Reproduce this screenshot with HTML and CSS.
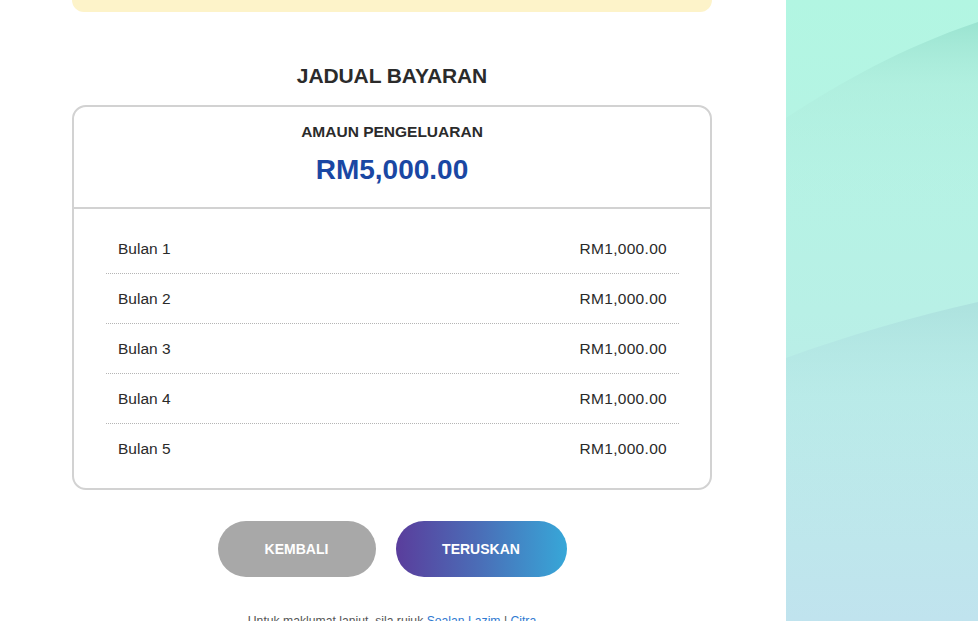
FILE: index.html
```html
<!DOCTYPE html>
<html lang="ms">
<head>
<meta charset="utf-8">
<title>Jadual Bayaran</title>
<link rel="stylesheet" href="styles.css">
</head>
<body>
<div class="page">
  <main class="main">
    <div class="notice"></div>
    <h1 class="title">JADUAL BAYARAN</h1>
    <section class="card">
      <div class="card-head">
        <div class="label">AMAUN PENGELUARAN</div>
        <div class="amount">RM5,000.00</div>
      </div>
      <div class="rows">
        <div class="row"><span>Bulan 1</span><span class="val">RM1,000.00</span></div>
        <div class="row"><span>Bulan 2</span><span class="val">RM1,000.00</span></div>
        <div class="row"><span>Bulan 3</span><span class="val">RM1,000.00</span></div>
        <div class="row"><span>Bulan 4</span><span class="val">RM1,000.00</span></div>
        <div class="row"><span>Bulan 5</span><span class="val">RM1,000.00</span></div>
      </div>
    </section>
    <div class="actions">
      <button class="btn btn-back">KEMBALI</button>
      <button class="btn btn-next">TERUSKAN</button>
    </div>
    <p class="foot">Untuk maklumat lanjut, sila rujuk <a href="#">Soalan Lazim</a> | <a href="#">Citra</a></p>
  </main>
  <aside class="side">
    <svg class="waves" viewBox="0 0 192 621" preserveAspectRatio="none" width="192" height="621">
      <defs>
        <linearGradient id="bg" x1="0" y1="0" x2="0" y2="1">
          <stop offset="0" stop-color="#b2f6e2"/>
          <stop offset="0.5" stop-color="#b8f0e6"/>
          <stop offset="1" stop-color="#c0e3ee"/>
        </linearGradient>
        <linearGradient id="sh1" x1="0" y1="0" x2="0" y2="1">
          <stop offset="0" stop-color="#98e2cf" stop-opacity="0.9"/>
          <stop offset="0.3" stop-color="#ace9da" stop-opacity="0.45"/>
          <stop offset="1" stop-color="#b8f0e6" stop-opacity="0"/>
        </linearGradient>
        <linearGradient id="sh2" x1="0" y1="0" x2="0" y2="1">
          <stop offset="0" stop-color="#a8dcdb" stop-opacity="0.7"/>
          <stop offset="0.4" stop-color="#b6e4e8" stop-opacity="0.25"/>
          <stop offset="1" stop-color="#c0e3ee" stop-opacity="0"/>
        </linearGradient>
      </defs>
      <rect x="0" y="0" width="192" height="621" fill="url(#bg)"/>
      <path d="M0 118 C55 82 115 48 192 22 L192 230 L0 230 Z" fill="url(#sh1)"/>
      <path d="M0 358 C60 336 130 316 192 302 L192 540 L0 540 Z" fill="url(#sh2)"/>
    </svg>
  </aside>
</div>
</body>
</html>
```
FILE: styles.css
```css
* { box-sizing: border-box; }
html, body { margin: 0; padding: 0; }
body {
  font-family: "Liberation Sans", Arial, sans-serif;
  color: #333;
  background: #fff;
  overflow: hidden;
}
.page {
  display: flex;
  width: 978px;
  height: 621px;
  overflow: hidden;
}
.main {
  width: 786px;
  flex: none;
  padding: 0 74px 0 72px;
  background: #fff;
}
.notice {
  height: 12px;
  background: #fdf3c9;
  border-radius: 0 0 16px 16px;
}
.title {
  margin: 52px 0 17px;
  font-size: 21px;
  line-height: 24px;
  font-weight: 700;
  text-align: center;
  color: #2b2b2b;
  letter-spacing: -0.1px;
}
.card {
  border: 2px solid #d2d2d2;
  border-radius: 14px;
  background: #fff;
}
.card-head {
  padding: 16px 0 22px;
  text-align: center;
  border-bottom: 2px solid #d2d2d2;
}
.label {
  font-size: 15.5px;
  line-height: 18px;
  font-weight: 700;
  color: #2b2b2b;
}
.amount {
  margin-top: 14px;
  font-size: 28px;
  line-height: 30px;
  font-weight: 700;
  color: #1a47a3;
}
.rows {
  padding: 15px 31px 14px 32px;
}
.row {
  display: flex;
  justify-content: space-between;
  align-items: center;
  height: 50px;
  padding: 0 12px;
  font-size: 15.5px;
  color: #2a2a2a;
  border-bottom: 1px dotted #b5b5b5;
}
.row:last-child { border-bottom: none; }
.val { font-weight: 400; letter-spacing: 0.3px; }
.actions {
  display: flex;
  justify-content: center;
  gap: 20px;
  margin-top: 31px;
}
.btn {
  height: 56px;
  border: none;
  border-radius: 28px;
  font-family: "Liberation Sans", Arial, sans-serif;
  font-size: 14px;
  font-weight: 700;
  color: #fff;
  cursor: pointer;
}
.btn-back {
  width: 158px;
  background: #a8a8a8;
}
.btn-next {
  width: 171px;
  background: linear-gradient(90deg, #5a3d9c 0%, #4a6fb8 50%, #37a7d8 100%);
}
.foot {
  margin: 37px 0 0;
  text-align: center;
  font-size: 12.2px;
  line-height: 14px;
  color: #555;
}
.foot a { color: #2f7ad1; text-decoration: none; }
.side {
  flex: 1;
  height: 621px;
}
.waves { display: block; }
```
